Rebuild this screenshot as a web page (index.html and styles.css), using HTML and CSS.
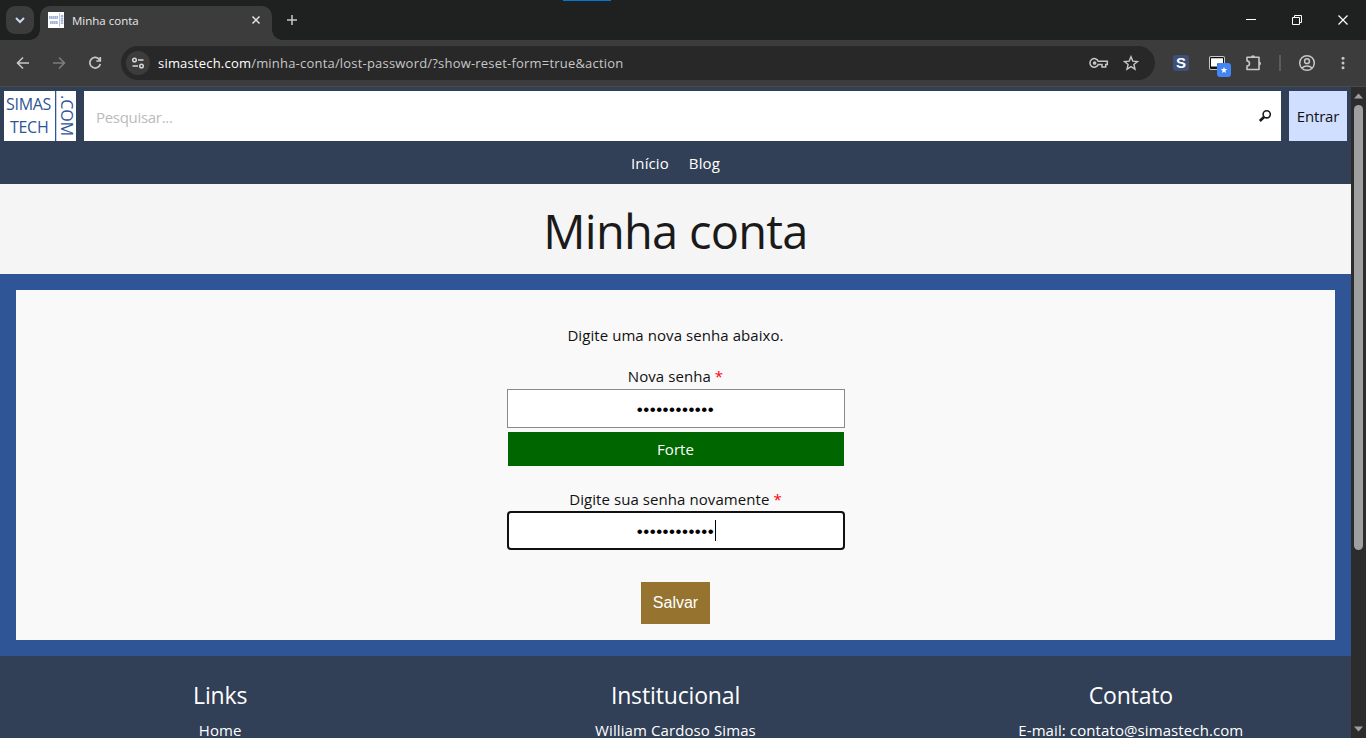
FILE: index.html
```html
<!DOCTYPE html>
<html lang="pt-BR">
<head>
    <meta charset="UTF-8">
    <title>Minha conta</title>
    <link rel="stylesheet" href="styles.css">
</head>
<body>
<div class="browser">
    <div class="tabs">
        <span class="loading"></span>
        <div class="tab-search">
            <svg width="28" height="28" viewBox="0 0 28 28"><path d="M10 12l4 4 4-4" fill="none" stroke="#c7d8f2" stroke-width="2"/></svg>
        </div>
        <div class="tab">
            <svg class="favicon" width="16" height="16" viewBox="0 0 16 16">
                <rect width="16" height="16" fill="#fff"/>
                <path d="M1 5.500h9M2 10.500h8" stroke="#a3b4d8" stroke-width="3" stroke-dasharray="1.700 .3"/>
                <path d="M11.500 1v14" stroke="#b9c7e2"/>
                <path d="M14 3v9" stroke="#a3b4d8" stroke-width="2.500" stroke-dasharray="2 .4"/>
            </svg>
            <span class="tab-title">Minha conta</span>
            <svg width="10" height="10" viewBox="0 0 10 10"><path d="M1.500 1.500l7 7M8.500 1.500l-7 7" stroke="#e3e3e3" stroke-width="1.500"/></svg>
        </div>
        <svg class="new-tab" width="12" height="12" viewBox="0 0 12 12"><path d="M6 1v10M1 6h10" stroke="#c7c7c7" stroke-width="1.500"/></svg>
        <div class="window-buttons">
            <svg width="46" height="40" viewBox="0 0 46 40"><path d="M18 19.500h10" stroke="#fff"/></svg>
            <svg width="46" height="40" viewBox="0 0 46 40"><path d="M18.500 17.500h7v7h-7zM20.500 17.500v-2h7v7h-2" fill="none" stroke="#fff"/></svg>
            <svg width="46" height="40" viewBox="0 0 46 40"><path d="M18.500 15.500l9 9M27.500 15.500l-9 9" stroke="#fff" stroke-width="1.200"/></svg>
        </div>
    </div>
    <div class="toolbar">
        <svg class="nav-icon" width="16" height="16" viewBox="0 0 16 16"><path d="M14 8H3M8 2.500L2.500 8 8 13.500" fill="none" stroke="#c7c7c7" stroke-width="1.600"/></svg>
        <svg class="nav-icon" width="16" height="16" viewBox="0 0 16 16"><path d="M2 8h11M8 2.500L13.500 8 8 13.500" fill="none" stroke="#7c7c7c" stroke-width="1.600"/></svg>
        <svg class="nav-icon" width="16" height="16" viewBox="0 0 16 16"><path d="M12.700 5A5.300 5.300 0 1 0 13.300 9M13.300 2v4H9.300" fill="none" stroke="#c7c7c7" stroke-width="1.700"/></svg>
        <div class="address">
            <span class="site-info">
                <svg width="14" height="14" viewBox="0 0 14 14" fill="none" stroke="#d5d5d5" stroke-width="1.500"><circle cx="3.500" cy="4" r="1.800"/><path d="M7 4h5.500M1.500 10H7"/><circle cx="10.500" cy="10" r="1.800"/></svg>
            </span>
            <span class="url"><b>simastech.com</b>/minha-conta/lost-password/?show-reset-form=true&amp;action</span>
            <svg class="key" width="20" height="16" viewBox="0 0 20 16" fill="none" stroke="#c7c7c7" stroke-width="1.500"><path d="M9.200 6.200H18.300V9.600H16.700V12H13V9.600H9.200A4.300 4.300 0 1 1 9.200 6.200z"/><circle cx="5.600" cy="8" r="1.100" fill="#c7c7c7"/></svg>
            <svg width="16" height="16" viewBox="0 0 16 16"><path d="M8 1.700l1.800 4.400 4.700.4-3.600 3 1.100 4.700L8 11.700l-4 2.500 1.100-4.700-3.600-3 4.700-.4z" fill="none" stroke="#c7c7c7" stroke-width="1.400"/></svg>
        </div>
        <div class="extensions">
            <span class="ext-s">S</span>
            <svg class="ext-star" width="24" height="24" viewBox="0 0 24 24">
                <rect x="2" y="3" width="16" height="14" rx="2" fill="#c7c7c7"/>
                <rect x="3" y="4" width="14" height="12" rx="1" fill="#111"/>
                <path d="M4 5.500h12v8H4z" fill="#fff"/><path d="M10 9h6v5h-6z" fill="#111"/>
                <path d="M4 5.500h12v5H4z" fill="#fff"/>
                <rect x="10" y="10" width="14" height="14" rx="3" fill="#4285f4"/>
                <path d="M17 14l.9 2.100 2.300.2-1.800 1.500.6 2.200-2-1.200-2 1.200.6-2.200-1.800-1.500 2.300-.2z" fill="#fff"/>
            </svg>
            <svg class="puzzle" width="18" height="18" viewBox="0 0 18 18"><path d="M2 3.300H14V15.500H2V12C5.300 12 5.300 7 2 7z" fill="none" stroke="#c7c7c7" stroke-width="1.600" stroke-linejoin="round"/><path d="M6 3.300a2 2 0 0 1 4 0zM14 7.400a2 2 0 0 1 0 4z" fill="#c7c7c7"/></svg>
            <span class="divider"></span>
            <svg class="profile" width="18" height="18" viewBox="0 0 18 18" fill="none" stroke="#c7c7c7" stroke-width="1.500"><circle cx="9" cy="9" r="7.300"/><circle cx="9" cy="7.200" r="2.400"/><path d="M4 14c2.500-2.700 7.500-2.700 10 0"/></svg>
            <svg width="4" height="14" viewBox="0 0 4 14" fill="#c7c7c7"><circle cx="2" cy="2.200" r="1.500"/><circle cx="2" cy="7" r="1.500"/><circle cx="2" cy="11.800" r="1.500"/></svg>
        </div>
    </div>
</div>
<div class="viewport">
    <div class="page">
        <header>
            <div class="top">
                <div class="logo">
                    <div class="logo-name"><span>SIMAS</span><span class="tech">TECH</span></div>
                    <div class="logo-com"><span>.COM</span></div>
                </div>
                <div class="search">
                    <span>Pesquisar...</span>
                    <svg width="14" height="14" viewBox="0 0 14 14" fill="none" stroke="#1a1a1a"><circle cx="8.700" cy="5.300" r="3.600" stroke-width="1.600"/><path d="M6 8L1.800 12" stroke-width="2.600"/></svg>
                </div>
                <a class="login">Entrar</a>
            </div>
            <nav><a>Início</a><a>Blog</a></nav>
        </header>
        <div class="page-title"><h1>Minha conta</h1></div>
        <main>
            <form class="card">
                <p class="intro">Digite uma nova senha abaixo.</p>
                <label class="label-new">Nova senha <em>*</em></label>
                <div class="field">••••••••••••</div>
                <div class="strength">Forte</div>
                <label class="label-again">Digite sua senha novamente <em>*</em></label>
                <div class="field focus">••••••••••••<i class="caret"></i></div>
                <button type="button">Salvar</button>
            </form>
        </main>
        <footer>
            <div class="col"><h2>Links</h2><p>Home</p></div>
            <div class="col"><h2>Institucional</h2><p>William Cardoso Simas</p></div>
            <div class="col"><h2>Contato</h2><p>E-mail: contato@simastech.com</p></div>
        </footer>
    </div>
    <div class="scrollbar">
        <svg width="9" height="6" viewBox="0 0 9 6"><path d="M0 5.500L4.500.5 9 5.500z" fill="#9f9f9f"/></svg>
        <span class="thumb"></span>
        <svg class="down" width="9" height="6" viewBox="0 0 9 6"><path d="M0 .5h9L4.500 5.500z" fill="#9f9f9f"/></svg>
    </div>
</div>
</body>
</html>
```
FILE: styles.css
```css
* {
    box-sizing: border-box;
    margin: 0;
    padding: 0;
}

body {
    height: 738px;
    overflow: hidden;
    background: #3c3c3c;
    font-family: "Open Sans", "Noto Sans", sans-serif;
    font-size: 15px;
    color: #111;
}

svg {
    display: block;
    flex-shrink: 0;
}

/* browser */
.browser {
    height: 87px;
    background: #3c3c3c;
    border-bottom: 1px solid #4a4a4a;
}

.tabs {
    position: relative;
    display: flex;
    height: 40px;
    background: #1f2120;
}

.loading {
    position: absolute;
    left: 563px;
    top: 0;
    width: 48px;
    height: 1px;
    background: #0078d4;
}

.tab-search {
    width: 28px;
    height: 28px;
    margin: 6px 6px 0;
    border-radius: 9px;
    background: #3c3c3c;
}

.tab {
    position: relative;
    display: flex;
    align-items: center;
    width: 232px;
    height: 34px;
    margin-top: 6px;
    padding: 0 11px 6px 8px;
    border-radius: 10px 10px 0 0;
    background: #3c3c3c;
}

.tab:before,
.tab:after {
    content: "";
    position: absolute;
    bottom: 0;
    left: -10px;
    width: 10px;
    height: 10px;
    background: radial-gradient(circle at 0 0, transparent 9.5px, #3c3c3c 10px);
}

.tab:after {
    left: auto;
    right: -10px;
    background: radial-gradient(circle at 100% 0, transparent 9.5px, #3c3c3c 10px);
}

.tab-title {
    flex: 1;
    margin-left: 8px;
    font-size: 11.5px;
    color: #e8e8e8;
}

.new-tab {
    margin: 14px 0 0 14px;
}

.window-buttons {
    display: flex;
    margin-left: auto;
}

.toolbar {
    display: flex;
    align-items: center;
    height: 46px;
    padding-left: 15px;
}

.nav-icon {
    margin-right: 20px;
}

.address {
    display: flex;
    align-items: center;
    width: 1034px;
    height: 34px;
    margin-left: -2px;
    padding: 0 16px 0 5px;
    border-radius: 17px;
    background: #282828;
}

.site-info {
    display: flex;
    align-items: center;
    justify-content: center;
    width: 24px;
    height: 24px;
    border-radius: 50%;
    background: #3c3c3c;
}

.url {
    flex: 1;
    margin-left: 8px;
    font-size: 13px;
    letter-spacing: 0.2px;
    color: #c7c7c7;
}

.url b {
    font-weight: 400;
    color: #fff;
}

.key {
    margin-right: 14px;
}

.extensions {
    display: flex;
    align-items: center;
    margin-left: 18px;
}

.ext-s {
    width: 16px;
    height: 16px;
    border-radius: 3px;
    background: #3d5079;
    font: bold 15px/16px "Liberation Sans", sans-serif;
    text-align: center;
    color: #fff;
}

.ext-star {
    margin: 3px 0 0 18px;
}

.puzzle {
    margin-left: 14px;
}

.divider {
    width: 2px;
    height: 16px;
    margin: 0 17px 0 16px;
    background: #5c5c5c;
}

.profile {
    margin-right: 25px;
}

/* site */
.viewport {
    display: flex;
    height: 651px;
}

.page {
    width: 1351px;
    overflow: hidden;
}

header {
    height: 97px;
    padding: 4px;
    background: #313f57;
}

.top {
    display: flex;
    gap: 8px;
    height: 50px;
}

.logo {
    display: flex;
    width: 72px;
    background: #fff;
    font-size: 16px;
    color: #2f5597;
}

.logo-name {
    display: flex;
    flex-direction: column;
    width: 52px;
    padding: 2px 0 0 2px;
    border-right: 1px solid #2f5597;
    line-height: 23px;
    letter-spacing: -0.3px;
}

.tech {
    padding-left: 4px;
}

.logo-com {
    display: flex;
    align-items: center;
    width: 20px;
    padding-top: 4px;
    border-left: 1px solid #c3cfe4;
    line-height: 20px;
    writing-mode: vertical-rl;
}

.logo-com span {
    height: 40px;
}

.search {
    display: flex;
    align-items: center;
    justify-content: space-between;
    flex: 1;
    padding: 0 9px 0 12px;
    background: #fff;
    color: #bbb;
}

.search span {
    padding-top: 2px;
    letter-spacing: -0.3px;
}

.login {
    width: 58px;
    background: #d0dfff;
    line-height: 51px;
    letter-spacing: -0.2px;
    text-align: center;
}

nav {
    display: flex;
    justify-content: center;
    gap: 20px;
    line-height: 44px;
    letter-spacing: 0.1px;
    color: #fff;
}

.page-title {
    height: 90px;
    background: #f5f5f5;
    text-align: center;
}

h1 {
    padding-top: 2px;
    font-size: 47px;
    font-weight: 400;
    line-height: 90px;
    letter-spacing: -0.75px;
    color: #1a1a1a;
}

main {
    height: 382px;
    padding: 16px;
    background: #2f5597;
}

.card {
    display: flex;
    flex-direction: column;
    align-items: center;
    height: 350px;
    padding-top: 33px;
    background: #f9f9f9;
    line-height: 24px;
    letter-spacing: 0.07px;
}

.label-new {
    margin-top: 17px;
}

.label-again {
    margin-top: 21px;
}

em {
    font-style: normal;
    color: #f00;
}

.field {
    display: flex;
    align-items: center;
    justify-content: center;
    position: relative;
    width: 338px;
    height: 39px;
    padding-top: 2px;
    border: 1px solid #8a8a8a;
    background: #fff;
    font-family: "Liberation Sans", sans-serif;
    font-size: 17px;
    letter-spacing: 0.5px;
    color: #000;
}

.label-new + .field {
    margin-top: 1px;
}

.focus {
    border: 2px solid #101010;
    border-radius: 4px;
}

.caret {
    position: absolute;
    left: 206px;
    top: 7px;
    width: 1px;
    height: 21px;
    background: #000;
}

.strength {
    width: 336px;
    height: 34px;
    margin-top: 4px;
    background: #006600;
    line-height: 35px;
    text-align: center;
    color: #fff;
}

button {
    width: 69px;
    height: 42px;
    margin-top: 32px;
    border: 0;
    background: #96742f;
    font-family: "Liberation Sans", Arial, sans-serif;
    font-size: 16px;
    color: #fff;
}

footer {
    display: grid;
    grid-template-columns: repeat(3, 1fr);
    height: 82px;
    padding-top: 19px;
    background: #313f57;
    text-align: center;
    color: #fff;
}

.col:first-child {
    padding-right: 10px;
}

.col:last-child {
    padding-left: 10px;
}

h2 {
    font-size: 23px;
    font-weight: 400;
    line-height: 40px;
    letter-spacing: -0.15px;
}

footer p {
    margin-top: 3px;
    line-height: 24px;
    letter-spacing: 0.1px;
}

.scrollbar {
    display: flex;
    flex-direction: column;
    align-items: center;
    width: 15px;
    padding: 6px 0 6px;
    background: #2c2c2c;
}

.thumb {
    width: 9px;
    height: 445px;
    margin-top: 6px;
    border-radius: 5px;
    background: #9f9f9f;
}

.down {
    margin-top: auto;
}
```
